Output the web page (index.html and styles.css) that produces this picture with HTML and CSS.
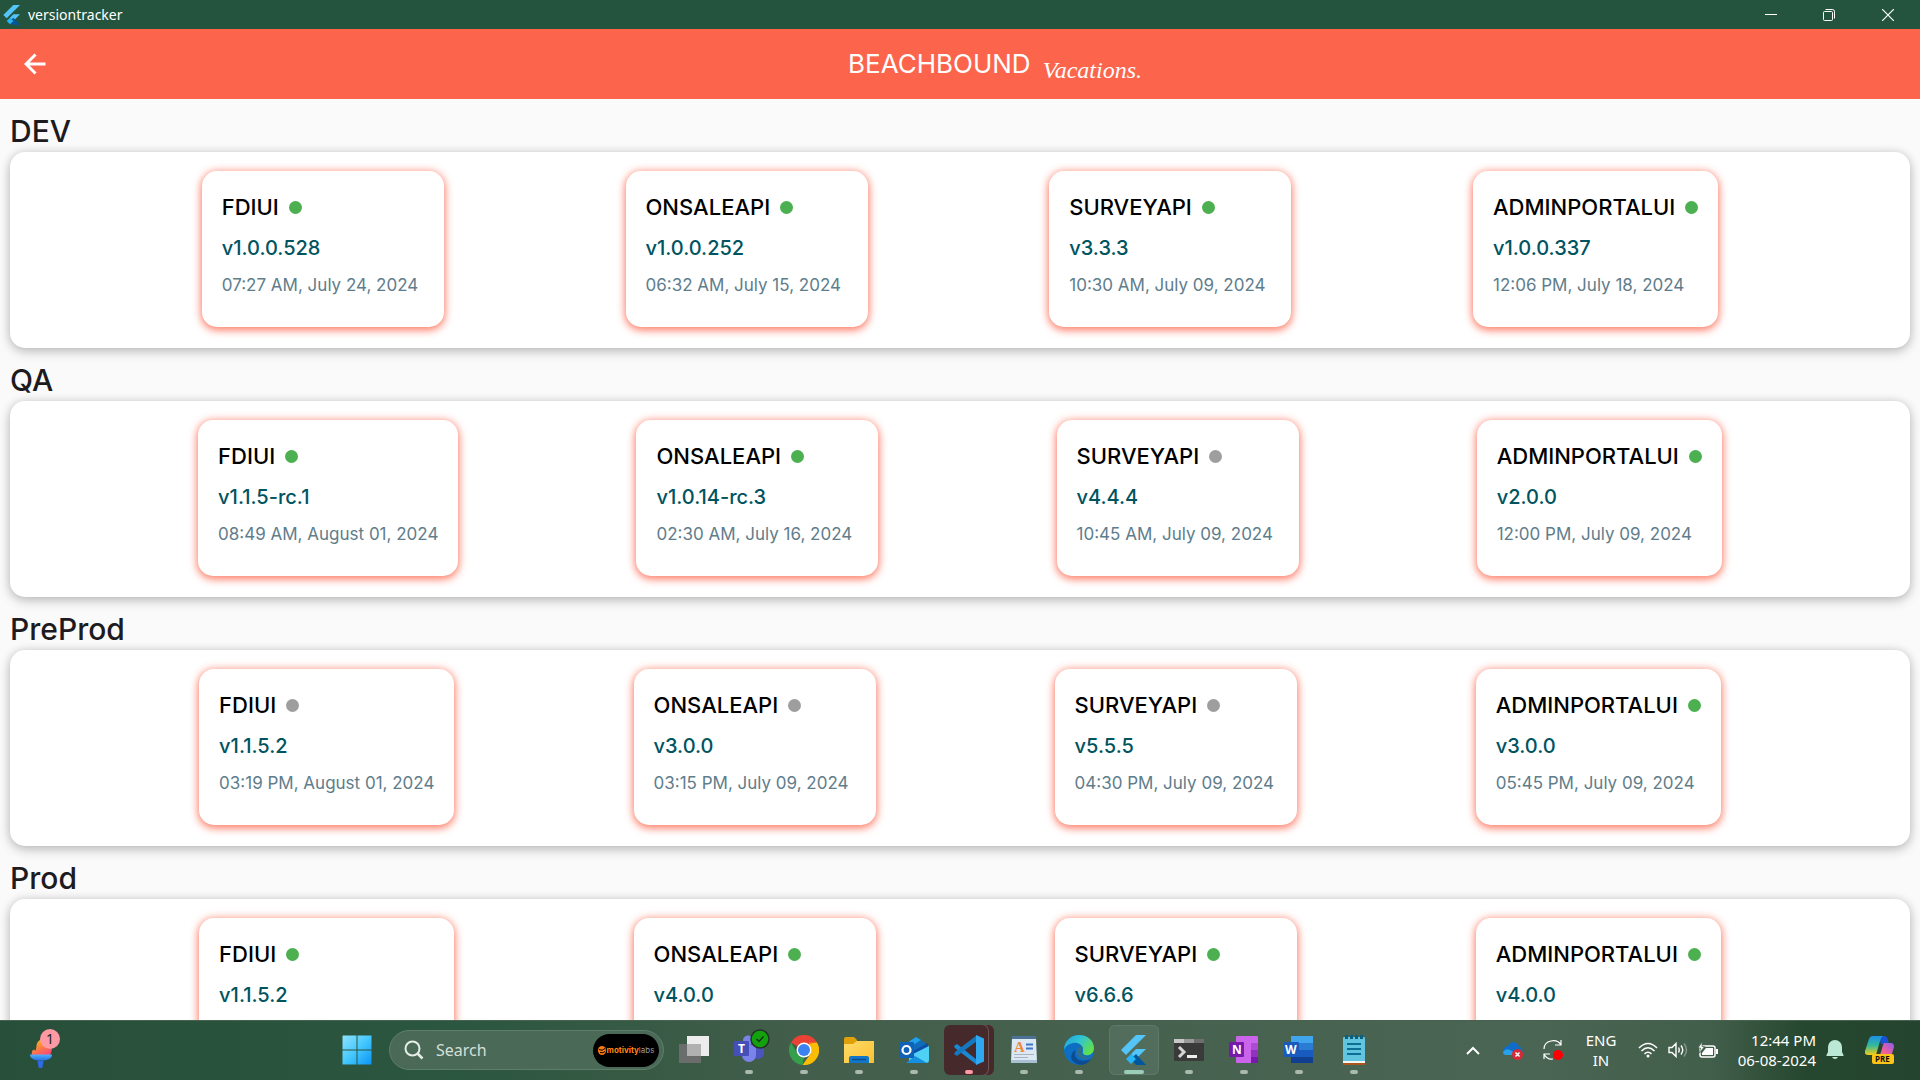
FILE: index.html
```html
<!DOCTYPE html>
<html lang="en">
<head>
<meta charset="utf-8">
<meta name="viewport" content="width=device-width, initial-scale=1">
<title>versiontracker</title>
<link rel="stylesheet" href="styles.css">
</head>
<body>
<svg class="defs" width="0" height="0" aria-hidden="true">
  <defs>
    <linearGradient id="win" x1="0" y1="0" x2="1" y2="1"><stop offset="0" stop-color="#8fe3ff"/><stop offset=".5" stop-color="#45c8fd"/><stop offset="1" stop-color="#0a95f5"/></linearGradient>
    <linearGradient id="flame" x1="0" y1="0" x2=".6" y2="1"><stop offset="0" stop-color="#f7c600"/><stop offset="1" stop-color="#ff4d73"/></linearGradient>
    <linearGradient id="torch" x1="0" y1="0" x2="0" y2="1"><stop offset="0" stop-color="#4fb2fb"/><stop offset="1" stop-color="#2a6fe0"/></linearGradient>
    <linearGradient id="folder" x1="0" y1="0" x2="1" y2="1"><stop offset="0" stop-color="#ffdc6b"/><stop offset="1" stop-color="#fbc02e"/></linearGradient>
    <linearGradient id="edgeA" x1="0" y1="0" x2="1" y2=".6"><stop offset="0" stop-color="#1c9fe0"/><stop offset=".5" stop-color="#33c5d0"/><stop offset="1" stop-color="#5fe04c"/></linearGradient>
    <linearGradient id="pilotA" x1="0" y1="0" x2="0" y2="1"><stop offset="0" stop-color="#1a90e8"/><stop offset=".5" stop-color="#35b99a"/><stop offset="1" stop-color="#f3cf12"/></linearGradient>
    <linearGradient id="pilotB" x1="1" y1="0" x2="0" y2="1"><stop offset="0" stop-color="#8a5cf0"/><stop offset=".6" stop-color="#f0609a"/><stop offset="1" stop-color="#fc8a50"/></linearGradient>
    <symbol id="flutter" viewBox="0 0 30 30">
      <path fill="#54c5f8" d="M17 0h10L7 20l-5-5z"/>
      <path fill="#54c5f8" d="M17 14h10L17 24l-5-5z"/>
      <path fill="#01579b" d="M12 24l5-5 10 11H17z"/>
      <path fill="#29b6f6" d="M7 24l5-5 5 5-5 5z"/>
    </symbol>
  </defs>
</svg>

<header class="titlebar">
  <svg class="titlebar-logo" width="20" height="20"><use href="#flutter"/></svg>
  <span class="titlebar-name">versiontracker</span>
  <div class="window-controls">
    <button type="button" aria-label="Minimize"><svg width="12" height="12" viewBox="0 0 12 12"><path d="M0 5.500h12" stroke="#fff"/></svg></button>
    <button type="button" aria-label="Restore"><svg width="12" height="12" viewBox="0 0 12 12" fill="none" stroke="#fff"><rect x=".5" y="2.500" width="9" height="9" rx="1"/><path d="M2.500 .5h7q2 0 2 2v7"/></svg></button>
    <button type="button" aria-label="Close"><svg width="12" height="12" viewBox="0 0 12 12"><path d="M0 0l12 12M12 0L0 12" stroke="#fff" stroke-width="1.200"/></svg></button>
  </div>
</header>

<div class="appbar">
  <button class="back" type="button" aria-label="Back"><svg width="22" height="22" viewBox="0 0 22 22" fill="none" stroke="#fff" stroke-width="3"><path d="M11.500 1.500L2 11l9.500 9.500M2 11h19.500"/></svg></button>
  <h1 class="brand"><span>BEACHBOUND</span><span class="brand-script">Vacations.</span></h1>
</div>

<main class="content">
  <section>
    <h2>DEV</h2>
    <div class="panel">
      <article class="card"><h3>FDIUI <i class="dot up"></i></h3><p class="version">v1.0.0.528</p><p class="date">07:27 AM, July 24, 2024</p></article>
      <article class="card"><h3>ONSALEAPI <i class="dot up"></i></h3><p class="version">v1.0.0.252</p><p class="date">06:32 AM, July 15, 2024</p></article>
      <article class="card"><h3>SURVEYAPI <i class="dot up"></i></h3><p class="version">v3.3.3</p><p class="date">10:30 AM, July 09, 2024</p></article>
      <article class="card"><h3>ADMINPORTALUI <i class="dot up"></i></h3><p class="version">v1.0.0.337</p><p class="date">12:06 PM, July 18, 2024</p></article>
    </div>
  </section>
  <section>
    <h2>QA</h2>
    <div class="panel">
      <article class="card"><h3>FDIUI <i class="dot up"></i></h3><p class="version">v1.1.5-rc.1</p><p class="date">08:49 AM, August 01, 2024</p></article>
      <article class="card"><h3>ONSALEAPI <i class="dot up"></i></h3><p class="version">v1.0.14-rc.3</p><p class="date">02:30 AM, July 16, 2024</p></article>
      <article class="card"><h3>SURVEYAPI <i class="dot"></i></h3><p class="version">v4.4.4</p><p class="date">10:45 AM, July 09, 2024</p></article>
      <article class="card"><h3>ADMINPORTALUI <i class="dot up"></i></h3><p class="version">v2.0.0</p><p class="date">12:00 PM, July 09, 2024</p></article>
    </div>
  </section>
  <section>
    <h2>PreProd</h2>
    <div class="panel">
      <article class="card"><h3>FDIUI <i class="dot"></i></h3><p class="version">v1.1.5.2</p><p class="date">03:19 PM, August 01, 2024</p></article>
      <article class="card"><h3>ONSALEAPI <i class="dot"></i></h3><p class="version">v3.0.0</p><p class="date">03:15 PM, July 09, 2024</p></article>
      <article class="card"><h3>SURVEYAPI <i class="dot"></i></h3><p class="version">v5.5.5</p><p class="date">04:30 PM, July 09, 2024</p></article>
      <article class="card"><h3>ADMINPORTALUI <i class="dot up"></i></h3><p class="version">v3.0.0</p><p class="date">05:45 PM, July 09, 2024</p></article>
    </div>
  </section>
  <section>
    <h2>Prod</h2>
    <div class="panel">
      <article class="card"><h3>FDIUI <i class="dot up"></i></h3><p class="version">v1.1.5.2</p><p class="date">03:19 PM, August 01, 2024</p></article>
      <article class="card"><h3>ONSALEAPI <i class="dot up"></i></h3><p class="version">v4.0.0</p><p class="date">03:15 PM, July 09, 2024</p></article>
      <article class="card"><h3>SURVEYAPI <i class="dot up"></i></h3><p class="version">v6.6.6</p><p class="date">04:30 PM, July 09, 2024</p></article>
      <article class="card"><h3>ADMINPORTALUI <i class="dot up"></i></h3><p class="version">v4.0.0</p><p class="date">05:45 PM, July 09, 2024</p></article>
    </div>
  </section>
</main>

<footer class="taskbar">
  <div class="taskbar-start">
    <button class="task widgets" type="button" aria-label="Widgets">
      <svg width="30" height="36" viewBox="0 0 30 36"><path fill="url(#flame)" d="M2 23C1 17 5 17 5 19 8 16 4 10 12 7 22 8 24 16 20 23z"/><path fill="url(#torch)" d="M0 22.500h22c0 4-4 6-11 6s-11-2-11-6z"/><path fill="#2e6be0" d="M7.500 28.500h6l-1 7q-2 1-4 0z"/></svg>
      <span class="count">1</span>
    </button>
  </div>
  <div class="apps">
    <button class="task" type="button" aria-label="Start"><svg width="30" height="30" viewBox="0 0 30 30" fill="url(#win)"><path d="M1 .5h13.500V14.500H.5V1zM15.500 .5h14v14h-14zM.5 15.500h14v14H.5zM15.500 15.500h14v14h-14z"/></svg></button>
    <div class="search">
      <svg width="20" height="20" viewBox="0 0 20 20" fill="none" stroke="#e6ece8" stroke-width="2"><circle cx="8.500" cy="8.500" r="7"/><path d="M13.500 13.500L18.500 18.500" stroke-width="2.500"/></svg>
      <input type="search" placeholder="Search" aria-label="Search">
      <span class="sponsor"><svg width="8" height="9" viewBox="0 0 8 9"><ellipse cx="4" cy="4.500" rx="4" ry="4.500" fill="#ff7a0a"/><path d="M1 3.500q3 2 6-1M2 6.500q3 1 5-1" stroke="#000" fill="none"/></svg><b>motivity</b>labs</span>
    </div>
    <button class="task" type="button" aria-label="Task view"><svg width="30" height="30" viewBox="0 0 30 30"><path fill="#6b6d6c" d="M0 9h22v19H0z"/><path fill="#ededed" d="M8 1h22v20H8z"/><path fill="#b0b1b0" d="M8 9h14v12H8z"/></svg></button>
    <button class="task open" type="button" aria-label="Teams"><svg width="30" height="30" viewBox="0 0 30 30"><circle cx="14" cy="5.500" r="5" fill="#7b83eb"/><path fill="#4b53bc" d="M20 10h10v9a6 6 0 0 1-9 4z"/><path fill="#7b83eb" d="M8 10h14v10a7 7 0 0 1-14 0z"/><rect y="6" width="15" height="15" rx="1" fill="#464eb8"/><text x="4" y="18" class="glyph">T</text></svg><svg class="presence" width="20" height="20" viewBox="0 0 20 20"><circle cx="10" cy="10" r="9" fill="#13a10e" stroke="#23352a" stroke-width="1.500"/><path d="M6.500 10l2.500 2.500 4.500-5" fill="none" stroke="#10351a" stroke-width="1.500"/></svg></button>
    <button class="task open" type="button" aria-label="Chrome"><svg width="30" height="30" viewBox="0 0 30 30"><path fill="#ea4335" d="M15 15L2 7.500A15 15 0 0 1 28 7.500z"/><path fill="#34a04c" d="M2 7.500L8.500 18.800 15 22l-1.500 8A15 15 0 0 1 2 7.500z"/><path fill="#fbbc05" d="M28 7.500A15 15 0 0 1 13.500 30l8-11.300L20 7.500z"/><path fill="#ea4335" d="M2 7.500L8 7.500h20l-7 1z"/><circle cx="15" cy="15" r="7.500" fill="#fff"/><circle cx="15" cy="15" r="6" fill="#3b82f0"/></svg></button>
    <button class="task open" type="button" aria-label="File Explorer"><svg width="30" height="30" viewBox="0 0 30 30"><path fill="#e0a008" d="M0 4q0-2 2-2h8l3 3v5H0z"/><path fill="url(#folder)" d="M0 9h9l4-3h17v22H0z"/><path fill="#1177c8" d="M5 28v-5q0-2 2-2h16q2 0 2 2v5z"/><path stroke="#0a4d92" stroke-width="1.500" d="M8 24.500h14"/></svg></button>
    <button class="task open" type="button" aria-label="Outlook"><svg width="30" height="30" viewBox="0 0 30 30"><path fill="#0f6cbd" d="M5 10L17 2l12 8v8H5z"/><path fill="#1fa0ea" d="M8 8l9-6 5 3-14 9z"/><path fill="#0b4fa6" d="M14 16L29 8v10l-15 8z"/><path fill="#4fd0f5" d="M10 21l20-10v14q0 3-3 3H12q-2 0-2-3z"/><path fill="#168fe0" d="M7 28l9-7 12 7z"/><rect y="7" width="15" height="16" rx="1" fill="#0f62b8"/><circle cx="7.500" cy="15" r="4" fill="none" stroke="#fff" stroke-width="2.200"/></svg></button>
    <button class="task open attention" type="button" aria-label="Visual Studio Code"><svg width="30" height="30" viewBox="0 0 30 30"><path fill="#1a8ad6" d="M0 11l3-2 20 16v5L1 13z"/><path fill="#1478c0" d="M0 19l3 2L23 6V0L1 17z"/><path fill="#2ea8f0" d="M22 0l8 3.500v23L22 30z"/></svg></button>
    <button class="task open" type="button" aria-label="WordPad"><svg width="30" height="30" viewBox="0 0 30 30"><path fill="#dce8f4" d="M3 3h24l1 24H2z"/><path fill="#4c7396" d="M3 1h24v3H3z"/><path fill="#a8bfd4" d="M2 25h26v3H2z"/><text x="5" y="17" class="glyph serif">A</text><path stroke="#3f76c8" stroke-width="2" d="M17 9.500h7M17 13.500h7"/><path stroke="#aab4c0" d="M5 19.500h20M5 22.500h14"/></svg></button>
    <button class="task open" type="button" aria-label="Edge"><svg width="30" height="30" viewBox="0 0 30 30"><circle cx="15" cy="15" r="15" fill="#0d6fc4"/><path fill="url(#edgeA)" d="M0 15C0 6 7 0 15 0c9 0 15 6 15 13 0 6-5 8-9 7-3-1-2-3-2-5C19 9 13 7 9 8 4 9 1 12 0 15z"/><path fill="#0c4c93" d="M12 15c-4 7 3 14 15 9-5 8-15 7-19 1-2-4 0-9 4-10z"/><path fill="#2f6f8c" d="M19 12c-5-1-8 4-5 9 3 4 9 4 13 1-8 2-12-4-8-10z"/></svg></button>
    <button class="task open active" type="button" aria-label="versiontracker"><svg width="30" height="30"><use href="#flutter"/></svg></button>
    <button class="task open" type="button" aria-label="Terminal"><svg width="30" height="30" viewBox="0 0 30 30"><rect y="4" width="30" height="22" rx="1" fill="#3a3a3a"/><path fill="#c8c8c8" d="M0 4h10v4H0z"/><path fill="#999" d="M10 4h10v4H10z"/><path fill="#6e6e6e" d="M20 4h10v4H20z"/><path fill="none" stroke="#d4d4d4" stroke-width="3" d="M5 12l5 5-5 5"/><path fill="#eee" d="M13 20h10v3H13z"/></svg></button>
    <button class="task open" type="button" aria-label="OneNote"><svg width="30" height="30" viewBox="0 0 30 30"><rect x="7" y="1" width="22" height="27" rx="1" fill="#ca64ea"/><path fill="#ae4bd5" d="M22 8h7v7h-7z"/><path fill="#9332bf" d="M22 15h7v7h-7z"/><path fill="#7719aa" d="M22 22h7v6h-7z"/><rect y="7" width="15" height="15" rx="1" fill="#7719aa"/><text x="3" y="19" class="glyph">N</text></svg></button>
    <button class="task open" type="button" aria-label="Word"><svg width="30" height="30" viewBox="0 0 30 30"><path fill="#41a5ee" d="M7 1h22v7H7z"/><path fill="#2b7cd3" d="M7 8h22v7H7z"/><path fill="#185abd" d="M7 15h22v7H7z"/><path fill="#103f91" d="M7 22h22v6H7z"/><rect y="7" width="15" height="15" rx="1" fill="#185abd"/><text x="1" y="19" class="glyph">W</text></svg></button>
    <button class="task open" type="button" aria-label="Notepad"><svg width="30" height="30" viewBox="0 0 30 30"><rect x="4" y="2" width="22" height="27" rx="1" fill="#62c5e0"/><path fill="#f5f5f5" d="M4 26h22v2H4z"/><path fill="#a8561a" d="M4 28h22v2H4z"/><path stroke="#0b6f94" stroke-width="2" d="M8 9h14M8 14h14M8 19h14"/><path stroke="#0b5f80" stroke-width="3" d="M7.500 0v4M12.500 0v4M17.500 0v4M22.500 0v4"/></svg></button>
  </div>
  <div class="tray">
    <button class="tray-item" type="button" aria-label="Show hidden icons"><svg width="14" height="9" viewBox="0 0 14 9" fill="none" stroke="#fff" stroke-width="2"><path d="M1 8l6-6 6 6"/></svg></button>
    <button class="tray-item" type="button" aria-label="OneDrive"><svg width="20" height="20" viewBox="0 0 20 20"><path fill="#0f6cc8" d="M1 14C-1 8 3 6 5 6c3-6 10-4 11 1 3 0 4 3 3 7z"/><path fill="#28a0ea" d="M0 12q3-5 9-1l6 4H3q-3 0-3-3z"/><circle cx="14.500" cy="14.500" r="5.500" fill="#d62b36"/><path stroke="#fff" stroke-width="1.500" d="M12.500 12.500l4 4m0-4l-4 4"/></svg></button>
    <button class="tray-item" type="button" aria-label="Updates"><svg width="20" height="22" viewBox="0 0 20 22" fill="none" stroke="#fff" stroke-width="1.200"><path d="M1 10C1 1 14-1 18 6M18 1v5h-6M1 20v-5h6M1 15q3 6 9 5"/><circle cx="15" cy="16" r="5" fill="#f00" stroke="none"/></svg></button>
    <button class="tray-item lang" type="button">ENG<br>IN</button>
    <button class="tray-item system" type="button" aria-label="Network, volume, battery">
      <svg width="20" height="16" viewBox="0 0 20 16" fill="none" stroke="#fff" stroke-width="1.600"><path d="M1 6q9-9 18 0M3.500 9q6.500-6.500 13 0M6.500 12q3.500-3.500 7 0"/><circle cx="10" cy="14" r="1.500" fill="#fff" stroke="none"/></svg>
      <svg width="20" height="16" viewBox="0 0 20 16" fill="none" stroke="#fff" stroke-width="1.400"><path d="M1 5.500h3l4-4v13l-4-4H1zM10.500 5.500q1.500 2.500 0 5M13 3.500q3.500 4.500 0 9"/><path d="M16 1.500q5 6.500 0 13" stroke="#839a8b"/></svg>
      <svg width="20" height="16" viewBox="0 0 20 16"><rect x="2" y="4" width="15" height="11" rx="2" fill="none" stroke="#fff" stroke-width="1.500"/><path fill="#fff" d="M4 11l4-5h7v7H4zM18 7h2v5h-2z"/><path fill="#fff" stroke="#4a6553" stroke-width=".8" d="M4 0L0 6h2.500L1.500 11 6.500 4.500H4z"/></svg>
    </button>
    <button class="tray-item clock" type="button"><time datetime="2024-08-06T12:44">12:44 PM<br>06-08-2024</time></button>
    <button class="tray-item bell" type="button" aria-label="Notifications"><svg width="18" height="20" viewBox="0 0 18 20" fill="#bce8d6"><path d="M2 7a7 7 0 0 1 14 0v5l1.500 3v1H.5v-1L2 12zM6 17h6q-1 2-3 2t-3-2z"/></svg></button>
    <button class="tray-item copilot" type="button" aria-label="Copilot preview"><svg width="30" height="30" viewBox="0 0 30 30"><path fill="#1b50d8" d="M14 1h5q3 0 4 4l1 4h-8z"/><path fill="url(#pilotA)" d="M8 1h10q-2 1-3 5l-4 14H3q-4 0-3-4L4 4q1-3 4-3z"/><path fill="url(#pilotB)" d="M19 8h7q3 0 3 4l-3 10H13q2-1 3-5l2-7z"/><rect x="7" y="19" width="22" height="10" rx="2" fill="#fcc419"/><text x="10" y="27" class="pre">PRE</text></svg></button>
  </div>
</footer>
</body>
</html>
```
FILE: styles.css
```css
* { box-sizing: border-box; }

body {
  margin: 0;
  height: 100vh;
  display: flex;
  flex-direction: column;
  overflow: hidden;
  background: #fafafa;
  color: #1d1b20;
  font-family: Inter, Roboto, sans-serif;
}

h1, h2, h3, p { margin: 0; font-weight: 500; }

button {
  border: 0;
  padding: 0;
  background: none;
  color: inherit;
  font: inherit;
}

svg { display: block; flex: none; }
.defs { position: absolute; }

/* window title bar */
.titlebar {
  flex: none;
  height: 29px;
  display: flex;
  align-items: center;
  gap: 6px;
  padding: 0 2px;
  background: #24543e;
  color: #fff;
  font: 14px/20px "Noto Sans", "Open Sans", sans-serif;
}
.window-controls { margin-left: auto; display: flex; }
.window-controls button {
  width: 58px;
  height: 29px;
  display: grid;
  place-items: center;
}
.window-controls button:last-child { width: 60px; }

/* application bar */
.appbar {
  flex: none;
  height: 70px;
  display: grid;
  grid-template-columns: 70px 1fr;
  align-items: center;
  background: #fc654c;
  color: #fff;
}
.back { justify-self: center; }
.brand {
  display: flex;
  justify-content: center;
  align-items: center;
  gap: 12px;
  font-size: 26px;
  line-height: 40px;
  font-weight: 400;
}
.brand-script {
  padding-top: 12px;
  font: italic 24px/28px "Liberation Serif", serif;
}

/* environments */
.content {
  flex: 1;
  min-height: 0;
  overflow-y: auto;
  scrollbar-width: none;
  padding: 0 10px 16px;
}
.content h2 {
  height: 53px;
  padding-top: 12px;
  font-size: 30px;
  line-height: 40px;
}
.panel {
  display: flex;
  justify-content: space-evenly;
  padding: 19px 10px 21px;
  border-radius: 15px;
  background: #fff;
  box-shadow: 0 4px 12px rgba(0, 0, 0, .2), 0 0 10px rgba(0, 0, 0, .12);
}
.card {
  min-width: 242px;
  padding: 20px 20px 28px;
  border-radius: 15px;
  background: #fff;
  box-shadow: 0 3px 8px rgba(252, 101, 76, .75), 0 0 8px rgba(252, 101, 76, .45);
}
.card h3 {
  display: flex;
  align-items: center;
  gap: 10px;
  color: #000;
  font-size: 22px;
  line-height: 32px;
}
.dot {
  width: 13px;
  height: 13px;
  border-radius: 50%;
  background: #9e9e9e;
}
.dot.up { background: #4caf50; }
.version {
  margin-top: 10px;
  color: #00545f;
  font-size: 20px;
  line-height: 30px;
}
.date {
  margin-top: 8px;
  color: #607d8b;
  font-size: 17px;
  line-height: 28px;
  font-weight: 400;
}

/* desktop taskbar */
.taskbar {
  position: relative;
  flex: none;
  height: 60px;
  display: flex;
  align-items: center;
  box-shadow: inset 0 1px #47634f;
  background: linear-gradient(90deg, #284f39 0%, #2b563f 24%, #435e4a 42%, #4a6553 80%, #425f4b 89%, #26472f 94%, #24442f 100%);
  color: #fff;
  font-family: "Noto Sans", "Open Sans", sans-serif;
}
.taskbar-start { width: 332px; padding-left: 20px; }
.apps { display: flex; align-items: center; gap: 5px; }
.task {
  position: relative;
  width: 50px;
  height: 50px;
  display: grid;
  place-items: center;
  border-radius: 6px;
}
.open::after {
  content: "";
  position: absolute;
  left: 21px;
  bottom: 1px;
  width: 8px;
  height: 4px;
  border-radius: 2px;
  background: #a9b9ae;
}
.active {
  background: #526d5b;
  box-shadow: inset 0 0 0 1px #5f7867;
}
.active::after { left: 15px; width: 20px; background: #9bceb8; }
.attention { background: #46292b; box-shadow: inset -6px 0 0 -1px #46292b, inset -6px 0 0 #6c5555; }
.attention::after { background: #ff99a4; }
.presence { position: absolute; left: 26px; top: 4px; }
.glyph { fill: #fff; font: bold 12px "Open Sans", sans-serif; }
.serif { fill: #f08a3c; font: bold 15px "Liberation Serif", serif; }
.pre { fill: #111; font: bold 8px "Open Sans", sans-serif; }
.count {
  position: absolute;
  left: 20px;
  top: 4px;
  width: 20px;
  height: 20px;
  border-radius: 50%;
  background: #ff99a4;
  color: #222;
  font-size: 14px;
  line-height: 20px;
}
.search {
  width: 275px;
  height: 40px;
  display: flex;
  align-items: center;
  gap: 12px;
  margin-left: 2px;
  padding: 0 4px 0 14px;
  border: 1px solid #5f7d6b;
  border-radius: 20px;
  background: #4a6a57;
}
.search input {
  flex: 1;
  min-width: 0;
  border: 0;
  padding: 0;
  background: none;
  color: #fff;
  font: 16px/24px "Noto Sans", "Open Sans", sans-serif;
  outline: none;
}
.search input::placeholder { color: #d5dfd9; opacity: 1; }
.sponsor {
  width: 66px;
  height: 33px;
  display: flex;
  align-items: center;
  justify-content: center;
  border-radius: 17px;
  background: #000;
  color: #999;
  font: 8px/12px Inter, sans-serif;
}
.sponsor b { margin-left: 1px; color: #ff860d; }
.tray {
  margin-left: auto;
  display: flex;
  align-items: center;
  padding-right: 14px;
  font-size: 15px;
  line-height: 20px;
}
.tray-item {
  width: 40px;
  height: 50px;
  display: grid;
  place-items: center;
}
.lang { width: 56px; align-content: center; }
.system { width: 98px; display: flex; align-items: center; justify-content: center; gap: 10px; }
.clock { width: 89px; justify-content: end; text-align: right; }
.bell { width: 38px; }
.copilot { width: 52px; }
```
